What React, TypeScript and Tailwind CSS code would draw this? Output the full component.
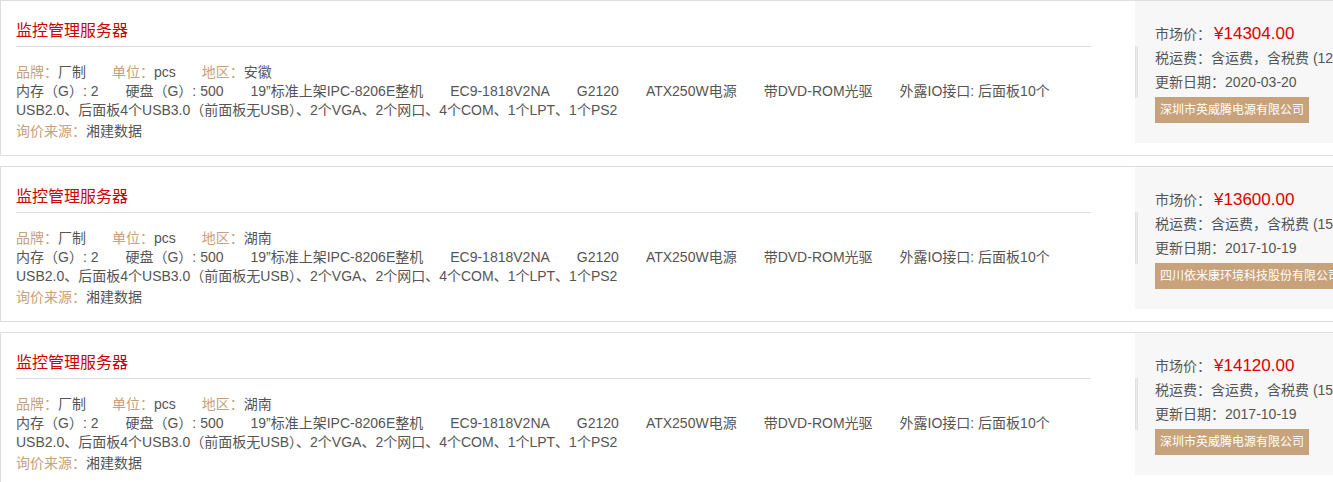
import React from "react";

type Item = {
  region: string;
  price: string;
  tax: string;
  date: string;
  company: string;
};

const items: Item[] = [
  { region: "安徽", price: "14304.00", tax: "(12%)", date: "2020-03-20", company: "深圳市英威腾电源有限公司" },
  { region: "湖南", price: "13600.00", tax: "(15%)", date: "2017-10-19", company: "四川依米康环境科技股份有限公司" },
  { region: "湖南", price: "14120.00", tax: "(15%)", date: "2017-10-19", company: "深圳市英威腾电源有限公司" },
];

const specs = [
  "内存（G）: 2",
  "硬盘（G）: 500",
  "19”标准上架IPC-8206E整机",
  "EC9-1818V2NA",
  "G2120",
  "ATX250W电源",
  "带DVD-ROM光驱",
];

function Card({ item }: { item: Item }) {
  return (
    <div className="flex border border-[#dedede] bg-white w-[1400px] h-[156px]">
      <div className="w-[1134px] shrink-0 pl-[15px] pr-[44px] pt-[18px]">
        <div className="h-[24px] leading-[24px] text-[16px] text-[#cc0000] border-b border-[#dddddd] pb-[3px] box-content">
          监控管理服务器
        </div>
        <div className="mt-[15px] text-[14px] leading-[20px] text-[#555555] whitespace-nowrap">
          <span className="text-[#c8a07a]">品牌：</span>
          <span className="mr-[26px]">厂制</span>
          <span className="text-[#c8a07a]">单位：</span>
          <span className="mr-[26px]">pcs</span>
          <span className="text-[#c8a07a]">地区：</span>
          <span>{item.region}</span>
        </div>
        <div className="text-[14px] leading-[19px] text-[#555555]">
          {specs.map((s) => (
            <span key={s} className="mr-[27px] whitespace-nowrap">
              {s}
            </span>
          ))}
          <span>外露IO接口: 后面板10个 USB2.0、后面板4个USB3.0（前面板无USB）、2个VGA、2个网口、4个COM、1个LPT、1个PS2</span>
        </div>
        <div className="mt-[2px] text-[14px] leading-[19px] text-[#555555]">
          <span className="text-[#c8a07a]">询价来源：</span>
          <span>湘建数据</span>
        </div>
      </div>
      <div className="h-[142px] w-[264px] shrink-0 bg-[#f7f7f7] flex items-center">
        <div className="w-[3px] h-[52px] bg-[#ececec] rounded-[1px] border-x border-[#e0e0e0] shrink-0" />
        <div className="pl-[17px] self-stretch pt-[21px] text-[14px] text-[#555555] whitespace-nowrap">
          <div className="h-[24px] leading-[24px] flex items-baseline">
            <span>市场价：</span>
            <span className="text-[17px] text-[#dd0000] ml-[3px]">¥{item.price}</span>
          </div>
          <div className="h-[24px] leading-[24px]">税运费：含运费，含税费 {item.tax}</div>
          <div className="h-[24px] leading-[24px]">更新日期：{item.date}</div>
          <div className="mt-[3px] inline-block h-[26px] leading-[26px] px-[5px] bg-[#c8a27b] text-white text-[12px]">
            {item.company}
          </div>
        </div>
      </div>
    </div>
  );
}

export default function App() {
  return (
    <div
      className="w-[1333px] h-[482px] overflow-hidden bg-white"
      style={{ fontFamily: '"Liberation Sans", "Noto Sans CJK SC", sans-serif' }}
    >
      <div className="flex flex-col gap-[10px]">
        {items.map((it, i) => (
          <Card key={i} item={it} />
        ))}
      </div>
    </div>
  );
}
